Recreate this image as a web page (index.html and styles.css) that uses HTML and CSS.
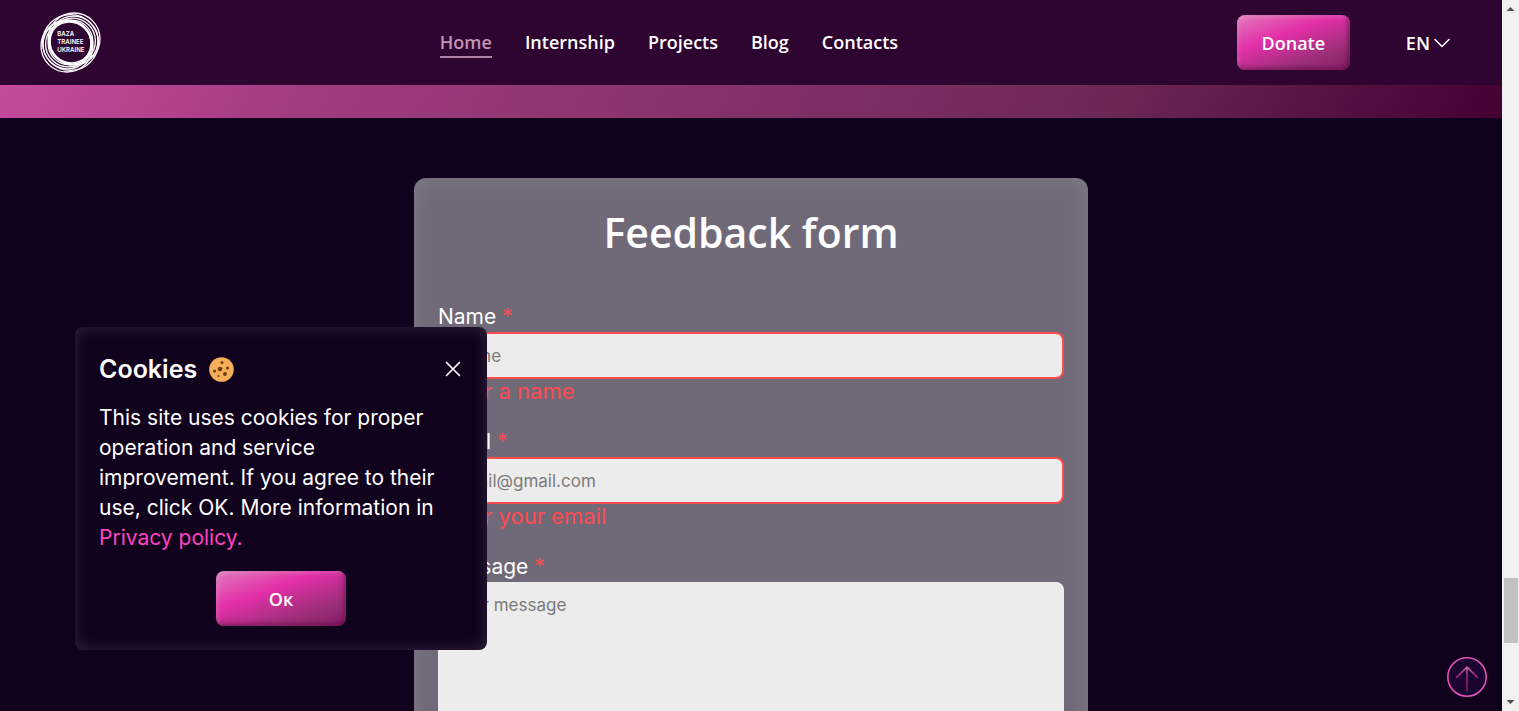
FILE: index.html
```html
<!DOCTYPE html>
<html lang="en">
<head>
<meta charset="utf-8">
<meta name="viewport" content="width=device-width, initial-scale=1">
<title>Baza Trainee Ukraine</title>
<link rel="stylesheet" href="styles.css">
</head>
<body>
<div class="app">
  <div class="page">
    <header class="header">
      <a class="logo" href="#" aria-label="Baza Trainee Ukraine">
        <svg class="logo-art" viewBox="0 0 60 60" fill="none" stroke="#fff">
          <g stroke-width="1.3">
            <circle cx="33.500" cy="26.500" r="25.500"/>
            <circle cx="33" cy="28" r="24"/>
            <circle cx="32" cy="28.500" r="22.500"/>
            <circle cx="31" cy="29" r="21"/>
            <circle cx="26.500" cy="33.500" r="25.500"/>
            <circle cx="27" cy="32" r="24"/>
            <circle cx="28" cy="31.500" r="22.500"/>
            <circle cx="29" cy="31" r="21"/>
            <circle cx="30" cy="30" r="27.500"/>
          </g>
          <g class="logo-text" fill="#fff" stroke="none">
            <text x="17" y="24">BAZA</text>
            <text x="17" y="31.500">TRAINEE</text>
            <text x="17" y="39">UKRAINE</text>
          </g>
        </svg>
      </a>
      <nav class="nav">
        <a class="nav-link nav-link-active" href="#">Home</a>
        <a class="nav-link" href="#">Internship</a>
        <a class="nav-link" href="#">Projects</a>
        <a class="nav-link" href="#">Blog</a>
        <a class="nav-link" href="#">Contacts</a>
      </nav>
      <div class="actions">
        <button class="button donate" type="button">Donate</button>
        <button class="language" type="button">EN
          <svg class="chevron" viewBox="0 0 16 10" fill="none" stroke="#fff" stroke-width="1.5" stroke-linecap="round" stroke-linejoin="round"><path d="M1 1.500 8 8.500 15 1.500"/></svg>
        </button>
      </div>
    </header>
    <div class="strip"></div>
    <main class="content">
      <form class="card" novalidate>
        <h1 class="title">Feedback form</h1>
        <div class="field">
          <label class="label" for="name">Name <span class="required">*</span></label>
          <input class="input invalid" id="name" type="text" placeholder="Name">
          <p class="error">Enter a name</p>
        </div>
        <div class="field">
          <label class="label" for="email">Email <span class="required">*</span></label>
          <input class="input invalid" id="email" type="email" placeholder="email@gmail.com">
          <p class="error">Enter your email</p>
        </div>
        <div class="field">
          <label class="label" for="message">Message <span class="required">*</span></label>
          <textarea class="input message" id="message" placeholder="Your message"></textarea>
        </div>
      </form>
    </main>
  </div>
  <div class="scrollbar" aria-hidden="true">
    <svg class="arrow" viewBox="0 0 17 17"><path d="M4.500 11 8.500 7l4 4z" fill="#505050"/></svg>
    <div class="track"><div class="track-before"></div><div class="thumb"></div><div class="track-after"></div></div>
    <svg class="arrow" viewBox="0 0 17 17"><path d="M4.500 6h8l-4 4z" fill="#505050"/></svg>
  </div>
</div>

<section class="cookies" aria-labelledby="cookies-title">
  <div class="cookies-head">
    <h2 class="cookies-title" id="cookies-title">Cookies
      <svg class="cookie" viewBox="0 0 25 25"><circle cx="12.500" cy="12.500" r="12.300" fill="#f6ae58"/><g fill="#6b3e0b"><circle cx="11" cy="12" r="2.300"/><circle cx="13" cy="5.500" r="1.500"/><circle cx="18.500" cy="11" r="1.500"/><circle cx="16" cy="17" r="1.900"/><circle cx="5.500" cy="14" r="1.500"/><circle cx="9.500" cy="19" r="1"/></g></svg>
    </h2>
    <button class="close" type="button" aria-label="Close">
      <svg class="close-icon" viewBox="0 0 16 16" stroke="#fff" stroke-width="1.700" stroke-linecap="round"><path d="M1.500 1.500l13 13M14.500 1.500l-13 13"/></svg>
    </button>
  </div>
  <p class="cookies-text">This site uses cookies for proper operation and service improvement. If you agree to their use, click OK. More information in <a class="policy" href="#">Privacy policy.</a></p>
  <button class="button ok" type="button">Ок</button>
</section>

<a class="to-top" href="#" aria-label="Back to top">
  <svg class="to-top-icon" viewBox="0 0 40 40" fill="none">
    <defs><linearGradient id="arrow-fill" gradientUnits="userSpaceOnUse" x1="20" y1="9" x2="20" y2="35"><stop stop-color="#d568b4"/><stop offset=".4" stop-color="#a02b82"/><stop offset="1" stop-color="#6b1b5f"/></linearGradient></defs>
    <circle cx="20" cy="20" r="19.200" fill="#1b0530" stroke="#e052b4" stroke-width="1.600"/>
    <path d="M20 34V10M9.500 20.500 20 10l10.500 10.500" stroke="url(#arrow-fill)" stroke-width="1.500" stroke-linecap="round" stroke-linejoin="round"/>
  </svg>
</a>
</body>
</html>
```

FILE: styles.css
```css
* { box-sizing: border-box; }

body {
  margin: 0;
  background: #10011d;
  color: #fff;
  font-family: Inter, "Open Sans", sans-serif;
  font-size: 21px;
  line-height: 30px;
}

h1, h2, p { margin: 0; }

button {
  border: 0;
  padding: 0;
  color: inherit;
  background: none;
  font: 600 18px/24px "Open Sans", sans-serif;
}

a { color: inherit; text-decoration: none; }

.app { display: flex; height: 100vh; overflow: hidden; }
.page { flex: 1; min-width: 0; overflow: hidden; }

.header {
  display: flex;
  justify-content: space-between;
  align-items: center;
  padding: 12px 52px 12px 40px;
  background: #2e0431;
}

.logo { width: 61px; height: 61px; }
.logo-art { display: block; width: 61px; height: 61px; }
.logo-text { font: 600 6px Inter, sans-serif; }

.nav { display: flex; gap: 33px; font: 600 18px/28px "Open Sans", sans-serif; }
.nav-link { border-bottom: 2px solid transparent; }
.nav-link-active { color: #c195b5; border-color: #b283a8; }

.actions { display: flex; justify-content: flex-end; align-items: center; gap: 56px; }

.button {
  height: 55px;
  border-radius: 8px;
  background: linear-gradient(160deg, #e27abd 0%, #e32fa7 38%, #9a2f78 75%, #841d62 100%);
  box-shadow: inset 2px 2px 4px rgba(255, 255, 255, .2), inset -2px -2px 5px rgba(90, 0, 65, .6);
}
.donate { width: 113px; }

.language { display: flex; align-items: center; gap: 4px; }
.chevron { width: 16px; height: 10px; }

.strip {
  height: 33px;
  background: linear-gradient(120deg, #c54b9c 0%, #a23c80 20%, #6c2755 74%, #430031 100%);
}

.content { padding: 60px 24px; }

.card {
  max-width: 674px;
  margin: 0 auto;
  padding: 24px;
  border-radius: 12px;
  background: #706977;
  box-shadow: inset 0 0 24px rgba(255, 255, 255, .12);
}

.title {
  margin-bottom: 40px;
  font: 600 41px/60px "Open Sans", sans-serif;
  text-align: center;
}

.field { margin-bottom: 24px; }
.label { display: block; }
.required, .error { color: #ff4b52; }
.error { font-size: 22px; line-height: 24px; }

.input {
  display: block;
  width: 100%;
  height: 47px;
  padding: 8px 14px;
  border: 0;
  border-radius: 8px;
  background: #ececec;
  color: #222;
  font: 17px/30px Inter, sans-serif;
}
.input::placeholder { color: #7b7b7b; opacity: 1; }
.invalid { border: 2px solid #ff4b4b; }
.message { height: 180px; resize: none; }

.scrollbar { display: flex; flex-direction: column; width: 17px; background: #f0f0f0; }
.arrow { width: 17px; height: 17px; }
.track { display: flex; flex: 1; flex-direction: column; padding: 0 1px 0 2px; }
.track-before { flex: 11; }
.track-after { flex: 1; }
.thumb { height: 65px; background: #c1c1c1; }

.cookies {
  position: fixed;
  left: 75px;
  bottom: 61px;
  width: 412px;
  padding: 24px;
  border-radius: 8px;
  background: #10011d;
  box-shadow: inset 0 0 16px rgba(255, 255, 255, .15);
}
.cookies-head { display: flex; justify-content: space-between; align-items: center; height: 36px; margin-bottom: 16px; }
.cookies-title { display: flex; align-items: center; gap: 12px; font-size: 25px; line-height: 36px; font-weight: 600; }
.cookie { width: 25px; height: 25px; }
.cookies-text { padding-right: 8px; }
.close { width: 18px; height: 18px; }
.close-icon { display: block; width: 16px; height: 16px; }
.policy { color: #ff43c2; }
.ok { display: block; width: 130px; margin: 18px auto 0; }

.to-top { position: fixed; right: 32px; bottom: 14px; }
.to-top-icon { display: block; width: 40px; height: 40px; }
```
